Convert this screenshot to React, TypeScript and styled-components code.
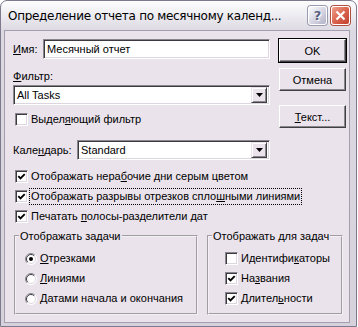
import React from 'react'
import styled, { createGlobalStyle } from 'styled-components'

const FACE = '#EAE3EB'

const GlobalStyle = createGlobalStyle`
  html, body { margin: 0; padding: 0; background: #fff; }
  body {
    font-family: "Liberation Sans", Arial, sans-serif;
    font-size: 11px;
    color: #000;
  }
`

const Window = styled.div`
  width: 357px;
  height: 327px;
  box-sizing: border-box;
  border: 1px solid #7c7a8c;
  border-radius: 7px 7px 0 0;
  background: linear-gradient(#fdfdfe, #dcd9e2 30px, #d6d2dc);
  padding: 0 6px 3px 3px;
  display: flex;
  flex-direction: column;
`

const TitleBar = styled.div`
  height: 29px;
  display: flex;
  align-items: center;
  padding-left: 4px;
  gap: 4px;
`

const Title = styled.div`
  flex: 1;
  font-family: "DejaVu Sans", sans-serif;
  font-size: 12px;
  letter-spacing: -0.3px;
  color: #000;
  white-space: nowrap;
  overflow: hidden;
`

const CaptionButton = styled.div<{ $kind: 'help' | 'close' }>`
  width: 19px;
  height: 19px;
  flex: none;
  box-sizing: border-box;
  border: 1px solid #fff;
  border-radius: 3px;
  box-shadow: 0 0 0 1px ${p => (p.$kind === 'close' ? '#b05040' : '#9a9ab0')};
  background: ${p =>
    p.$kind === 'close'
      ? 'linear-gradient(135deg, #f0a08c, #d8604a 55%, #c2412e)'
      : 'linear-gradient(135deg, #fbfbfd, #d4d4e2 55%, #b2b2c8)'};
  display: flex;
  align-items: center;
  justify-content: center;
  font-family: "DejaVu Sans", sans-serif;
  font-weight: bold;
  font-size: 13px;
  color: #5a5f82;
  text-shadow: 1px 1px 0 #fff;
`

const Client = styled.div`
  flex: 1;
  background: ${FACE};
  border: 1px solid #a49fac;
  padding: 8px 3px 0 8px;
  display: flex;
  flex-direction: column;
`

const Top = styled.div`
  display: flex;
  justify-content: space-between;
`

const FormCol = styled.div`
  width: 257px;
  display: flex;
  flex-direction: column;
`

const Field = styled.div<{ $gap?: number; $w?: number }>`
  display: flex;
  align-items: center;
  margin-top: ${p => p.$gap ?? 0}px;
  ${p => p.$w && `width: ${p.$w}px;`}
`

const Label = styled.span<{ $w: number }>`
  width: ${p => p.$w}px;
  flex: none;
`

const Caption = styled.div`
  line-height: 13px;
  margin-top: 11px;
`

const Sunken = styled.div`
  flex: 1;
  height: 20px;
  box-sizing: border-box;
  background: #fff;
  border: 1px solid;
  border-color: #8a8690 #fff #fff #8a8690;
  box-shadow: inset 1px 1px 0 #3c3a40, inset -1px -1px 0 #dcd6de;
  display: flex;
  align-items: center;
  padding: 0 2px 0 3px;
`

const ComboText = styled.span`
  flex: 1;
`

const DropButton = styled.div`
  width: 16px;
  height: 16px;
  box-sizing: border-box;
  background: ${FACE};
  border: 1px solid;
  border-color: ${FACE} #404040 #404040 ${FACE};
  box-shadow: inset 1px 1px 0 #fff, inset -1px -1px 0 #8a8690;
  display: flex;
  align-items: center;
  justify-content: center;
`

const ButtonCol = styled.div`
  width: 67px;
  display: flex;
  flex-direction: column;
`

const PushButton = styled.div<{ $default?: boolean; $gap: number }>`
  height: 23px;
  margin-top: ${p => p.$gap}px;
  box-sizing: border-box;
  border: 1px solid;
  border-color: #fff #404040 #404040 #fff;
  box-shadow: inset -1px -1px 0 #8a8690;
  ${p => p.$default && 'outline: 1px solid #000;'}
  display: flex;
  align-items: center;
  justify-content: center;
`

const CheckRow = styled.div<{ $gap?: number; $indent?: number }>`
  height: 17px;
  margin-top: ${p => p.$gap ?? 0}px;
  margin-left: ${p => p.$indent ?? 0}px;
  display: flex;
  align-items: center;
  gap: 2px;
  white-space: nowrap;
`

const Box = styled.span`
  width: 13px;
  height: 13px;
  box-sizing: border-box;
  flex: none;
  background: #fff;
  border: 1px solid;
  border-color: #8a8690 #fff #fff #8a8690;
  box-shadow: inset 1px 1px 0 #3c3a40, inset -1px -1px 0 #dcd6de;
  display: flex;
  align-items: center;
  justify-content: center;
`

const Text = styled.span<{ $focus?: boolean }>`
  padding: 1px 1px;
  line-height: 13px;
  outline: ${p => (p.$focus ? '1px dotted #000' : 'none')};
`

const Key = styled.span`
  text-decoration: underline;
`

const Groups = styled.div`
  display: flex;
  gap: 9px;
  margin-top: 4px;
  margin-left: 1px;
`

const Group = styled.fieldset<{ $w: number }>`
  width: ${p => p.$w}px;
  box-sizing: border-box;
  margin: 0;
  height: 86px;
  border: 2px groove #f4f0f6;
  padding: 7px 0 0 3px;
  display: flex;
  flex-direction: column;
  gap: 3px;
`

const Legend = styled.legend`
  padding: 0 1px;
  margin-left: 0;
  line-height: 14px;
  white-space: nowrap;
`

const Check = ({ on }: { on?: boolean }) => (
  <Box>
    {on && (
      <svg width="9" height="9" viewBox="0 0 9 9">
        <path d="M1.3 4.2 L3.5 6.4 L7.7 2.2" stroke="#000" strokeWidth="1.9" fill="none" />
      </svg>
    )}
  </Box>
)

const Radio = ({ on }: { on?: boolean }) => (
  <svg width="12" height="12" viewBox="0 0 12 12" style={{ flex: 'none' }}>
    <circle cx="6" cy="6" r="5.5" fill="#fff" />
    <path d="M2.1 9.9 A5.5 5.5 0 0 1 9.9 2.1" stroke="#8a8690" fill="none" />
    <path d="M9.9 2.1 A5.5 5.5 0 0 1 2.1 9.9" stroke="#fff" fill="none" />
    <path d="M2.8 9.2 A4.5 4.5 0 0 1 9.2 2.8" stroke="#3c3a40" fill="none" />
    <path d="M9.2 2.8 A4.5 4.5 0 0 1 2.8 9.2" stroke="#dcd6de" fill="none" />
    {on && <circle cx="6" cy="6" r="2" fill="#000" />}
  </svg>
)

const Arrow = () => (
  <svg width="7" height="4" viewBox="0 0 7 4">
    <path d="M0 0 H7 L3.5 4 Z" fill="#000" />
  </svg>
)

const App = () => {
  return (
    <>
      <GlobalStyle />
      <Window>
        <TitleBar>
          <Title>Определение отчета по месячному календ...</Title>
          <CaptionButton $kind="help">?</CaptionButton>
          <CaptionButton $kind="close">
            <svg width="11" height="11" viewBox="0 0 11 11">
              <path d="M1.5 1.5 L9.5 9.5 M9.5 1.5 L1.5 9.5" stroke="#fff" strokeWidth="2.2" />
            </svg>
          </CaptionButton>
        </TitleBar>
        <Client>
          <Top>
            <FormCol>
              <Field>
                <Label $w={30}><Key>И</Key>мя:</Label>
                <Sunken>Месячный отчет</Sunken>
              </Field>
              <Caption><Key>Ф</Key>ильтр:</Caption>
              <Field $gap={2}>
                <Sunken>
                  <ComboText>All Tasks</ComboText>
                  <DropButton><Arrow /></DropButton>
                </Sunken>
              </Field>
              <CheckRow $gap={6} $indent={2}>
                <Check />
                <Text>Выдел<Key>я</Key>ющий фильтр</Text>
              </CheckRow>
            </FormCol>
            <ButtonCol>
              <PushButton $default $gap={0}>OK</PushButton>
              <PushButton $gap={6}>Отмена</PushButton>
              <PushButton $gap={14}><span><Key>Т</Key>екст...</span></PushButton>
            </ButtonCol>
          </Top>
          <Field $gap={12} $w={257}>
            <Label $w={64}>Кале<Key>н</Key>дарь:</Label>
            <Sunken>
              <ComboText>Standard</ComboText>
              <DropButton><Arrow /></DropButton>
            </Sunken>
          </Field>
          <CheckRow $gap={8} $indent={2}>
            <Check on />
            <Text>Отображать нера<Key>б</Key>очие дни серым цветом</Text>
          </CheckRow>
          <CheckRow $gap={3} $indent={2}>
            <Check on />
            <Text $focus>Отображать разрывы отрезков спло<Key>ш</Key>ными линиями</Text>
          </CheckRow>
          <CheckRow $gap={3} $indent={2}>
            <Check on />
            <Text>Печатать <Key>п</Key>олосы-разделители дат</Text>
          </CheckRow>
          <Groups>
            <Group $w={184}>
              <Legend>Отображать задачи</Legend>
              <CheckRow $indent={6}>
                <Radio on />
                <Text><Key>О</Key>трезками</Text>
              </CheckRow>
              <CheckRow $indent={6}>
                <Radio />
                <Text><Key>Л</Key>иниями</Text>
              </CheckRow>
              <CheckRow $indent={6}>
                <Radio />
                <Text><Key>Д</Key>атами начала и окончания</Text>
              </CheckRow>
            </Group>
            <Group $w={136}>
              <Legend>Отображать для задач</Legend>
              <CheckRow $indent={13}>
                <Check />
                <Text>Идентифи<Key>к</Key>аторы</Text>
              </CheckRow>
              <CheckRow $indent={13}>
                <Check on />
                <Text>На<Key>з</Key>вания</Text>
              </CheckRow>
              <CheckRow $indent={13}>
                <Check on />
                <Text>Длител<Key>ь</Key>ности</Text>
              </CheckRow>
            </Group>
          </Groups>
        </Client>
      </Window>
    </>
  )
}

export default App
